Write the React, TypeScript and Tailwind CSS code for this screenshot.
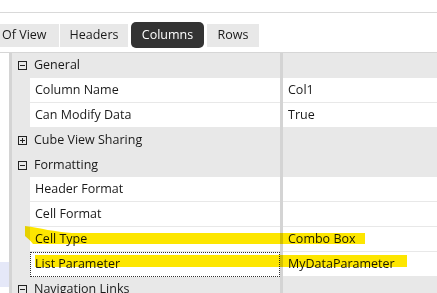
import React from "react";

type Row =
  | { kind: "cat"; label: string; open: boolean; h: string }
  | { kind: "prop"; label: string; value: string; h: string; focus?: boolean };

const rows: Row[] = [
  { kind: "cat", label: "General", open: true, h: "h-[25px]" },
  { kind: "prop", label: "Column Name", value: "Col1", h: "h-[25px]" },
  { kind: "prop", label: "Can Modify Data", value: "True", h: "h-[25px]" },
  { kind: "cat", label: "Cube View Sharing", open: false, h: "h-[25px]" },
  { kind: "cat", label: "Formatting", open: true, h: "h-[24px]" },
  { kind: "prop", label: "Header Format", value: "", h: "h-[25px]" },
  { kind: "prop", label: "Cell Format", value: "", h: "h-[25px]" },
  { kind: "prop", label: "Cell Type", value: "Combo Box", h: "h-[25px]" },
  { kind: "prop", label: "List Parameter", value: "MyDataParameter", h: "h-[25px]", focus: true },
  { kind: "cat", label: "Navigation Links", open: true, h: "h-[25px]" },
];

function ExpandBox({ open }: { open: boolean }) {
  return (
    <svg width="9" height="9" viewBox="0 0 9 9" className="shrink-0">
      <rect x="0.5" y="0.5" width="8" height="8" fill="none" stroke="#222" />
      <line x1="2" y1="4.5" x2="7" y2="4.5" stroke="#222" />
      {!open && <line x1="4.5" y1="2" x2="4.5" y2="7" stroke="#222" />}
    </svg>
  );
}

export default function App() {
  return (
    <div
      className="relative w-[437px] h-[293px] overflow-hidden bg-white text-[#1a1a1a]"
      style={{ fontFamily: '"Open Sans", "Noto Sans", sans-serif' }}
    >
      <div className="h-[13px] border-b border-[#d9d9d9]" />

      {/* tabs */}
      <div className="flex items-start h-[39px] text-[12.5px]">
        <div className="flex items-center mt-[11px] h-[23px] w-[59px] bg-[#e8e8e8] pl-[2px]">Of View</div>
        <div className="flex items-center justify-center mt-[11px] h-[23px] w-[68px] ml-[1px] bg-[#e8e8e8]">
          Headers
        </div>
        <div className="flex items-center justify-center mt-[9px] h-[26px] w-[73px] ml-[3px] rounded-[5px] bg-[#333333] text-white">
          Columns
        </div>
        <div className="flex items-center justify-center mt-[11px] h-[23px] w-[52px] ml-[3px] bg-[#e8e8e8]">Rows</div>
      </div>

      {/* property grid */}
      <div className="relative border-t border-[#d6d6d6] pl-[9px] text-[12.5px]">
        {rows.map((r, i) =>
          r.kind === "cat" ? (
            <div key={i} className={`flex ${r.h} bg-[#e8e8e8] border-l-[3px] border-[#d4d4d4]`}>
              <div className="flex items-center gap-[7px] w-[268px] pl-[6px]">
                <ExpandBox open={r.open} />
                <span>{r.label}</span>
              </div>
              <div className="w-[3px] bg-[#d4d4d4]" />
              <div className="flex-1" />
            </div>
          ) : (
            <div key={i} className={`flex ${r.h} border-l-[3px] border-[#d4d4d4]`}>
              <div className="w-[18px] bg-[#e8e8e8]" />
              <div
                className={`flex items-center w-[250px] pl-[5px] bg-white ${
                  r.focus ? "outline outline-1 outline-dotted outline-[#333] -outline-offset-1" : "border-b border-[#e8e8e8]"
                }`}
              >
                {r.label}
              </div>
              <div className="w-[3px] bg-[#d4d4d4]" />
              <div className="flex items-center flex-1 pl-[5px] bg-white border-b border-[#e8e8e8]">{r.value}</div>
            </div>
          )
        )}

        {/* marker highlights */}
        <svg
          className="absolute left-0 top-0 pointer-events-none mix-blend-multiply"
          width="437"
          height="241"
        >
          <path
            d="M25,173 C40,175 55,179 72,180 L365,180 L365,191 L33,191 C30,187 27,185 25,183 Z"
            fill="#fde600"
          />
          <rect x="35" y="202" width="372" height="12" fill="#fde600" />
        </svg>
      </div>

      {/* selection behind the panel */}
      <div className="absolute left-0 top-[262px] w-[9px] h-[25px] bg-[#e5e8f8]" />
    </div>
  );
}
